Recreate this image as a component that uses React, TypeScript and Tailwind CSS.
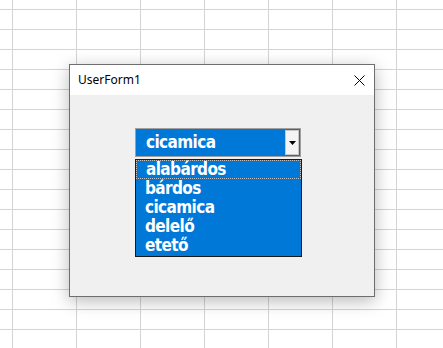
import React from "react";

const rows = Array.from({ length: 18 });

export default function App() {
  const items = ["alabárdos", "bárdos", "cicamica", "delelő", "etető"];
  return (
    <div className="relative w-[443px] h-[348px] overflow-hidden bg-white">
      <div className="grid grid-cols-[13px_64px_64px_64px_64px_64px_64px_64px] grid-rows-[10px_repeat(17,20px)]">
        {rows.map((_, r) =>
          Array.from({ length: 8 }).map((__, c) => (
            <div key={`${r}-${c}`} className="box-border border-r border-b border-[#d4d4d4]" />
          ))
        )}
      </div>
      <div className="absolute left-[69px] top-[64px] w-[306px] h-[233px] box-border border border-[#6e6e6e] bg-[#f0f0f0] shadow-[0_4px_16px_rgba(0,0,0,0.28)] flex flex-col">
        <div className="h-[30px] bg-white flex items-center justify-between pl-[8px] pr-[9px] shrink-0">
          <span className="text-[12px] text-black font-['Noto_Sans',sans-serif] leading-none">UserForm1</span>
          <svg width="11" height="11" viewBox="0 0 11 11">
            <path d="M0.5 0.5 L10.5 10.5 M10.5 0.5 L0.5 10.5" stroke="#000" strokeWidth="1" />
          </svg>
        </div>
        <div className="flex-1 pl-[65px] pt-[33px] flex flex-col gap-[2px]">
          <div className="w-[166px] h-[29px] box-border border border-[#a0a0a0] bg-[#0078d7] flex items-stretch">
            <div className="flex-1 flex items-center pl-[10px] text-white font-bold text-[17px] font-['DejaVu_Sans_Condensed','DejaVu_Sans',sans-serif] tracking-[-0.6px]">
              cicamica
            </div>
            <div className="w-[14px] my-[1px] mr-[1px] bg-[#f4f4f4] border border-[#c8c8c8] flex items-center justify-center">
              <svg width="7" height="4" viewBox="0 0 7 4">
                <path d="M0 0 H7 L3.5 4 Z" fill="#000" />
              </svg>
            </div>
          </div>
          <div className="w-[167px] h-[98px] box-border border border-[#1a1a1a] bg-[#0078d7] flex flex-col">
            {items.map((t, i) => (
              <div
                key={t}
                className={`h-[19px] shrink-0 flex items-center pl-[9px] text-white font-bold text-[17px] leading-none font-['DejaVu_Sans_Condensed','DejaVu_Sans',sans-serif] tracking-[-0.6px] ${
                  i === 0 ? "border border-dotted border-[#c0c0c0] pl-[8px]" : ""
                }`}
              >
                {t}
              </div>
            ))}
          </div>
        </div>
      </div>
    </div>
  );
}
